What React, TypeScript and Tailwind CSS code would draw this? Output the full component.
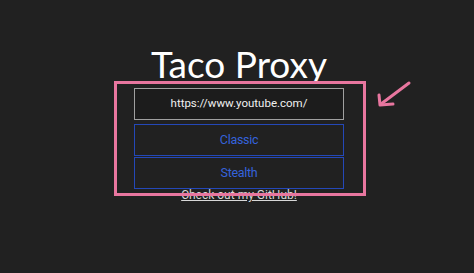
export default function App() {
  return (
    <div className="relative w-[474px] h-[273px] overflow-hidden bg-[#212121]">
      <div className="flex flex-col items-center pt-[43px] pl-[4px]">
        <h1 className="text-[37px] leading-[41px] text-white font-['Lato',sans-serif]">
          Taco Proxy
        </h1>
        <div className="mt-[4px] w-[210px] h-[32px] border border-[#a0a0a0] bg-[#1c1c1c] flex items-center justify-center text-[11.5px] text-[#f0f0f0] font-['Roboto',sans-serif]">
          https://www.youtube.com/
        </div>
        <div className="mt-[4px] w-[210px] h-[32px] border border-[#2448b8] flex items-center justify-center text-[12.5px] tracking-[-0.3px] text-[#3563dc] font-['Roboto',sans-serif]">
          Classic
        </div>
        <div className="mt-px w-[210px] h-[32px] border border-[#2448b8] flex items-center justify-center text-[12.5px] tracking-[-0.3px] text-[#3563dc] font-['Roboto',sans-serif]">
          Stealth
        </div>
        <a className="-mt-[1px] text-[12px] leading-[15px] text-[#d8d8d8] underline font-['Roboto',sans-serif]">
          Check out my GitHub!
        </a>
      </div>

      {/* annotation overlay */}
      <div className="absolute left-[114px] top-[81px] w-[252px] h-[115px] border-[3px] border-[#e8769f]" />
      <svg className="absolute left-[374px] top-[76px]" width="40" height="36" viewBox="0 0 40 36">
        <path d="M35 7 L7 28" stroke="#e8769f" strokeWidth="3" strokeLinecap="round" fill="none" />
        <path d="M5 19 L6 29 L19 28" stroke="#e8769f" strokeWidth="3" strokeLinecap="round" strokeLinejoin="round" fill="none" />
      </svg>
    </div>
  );
}
